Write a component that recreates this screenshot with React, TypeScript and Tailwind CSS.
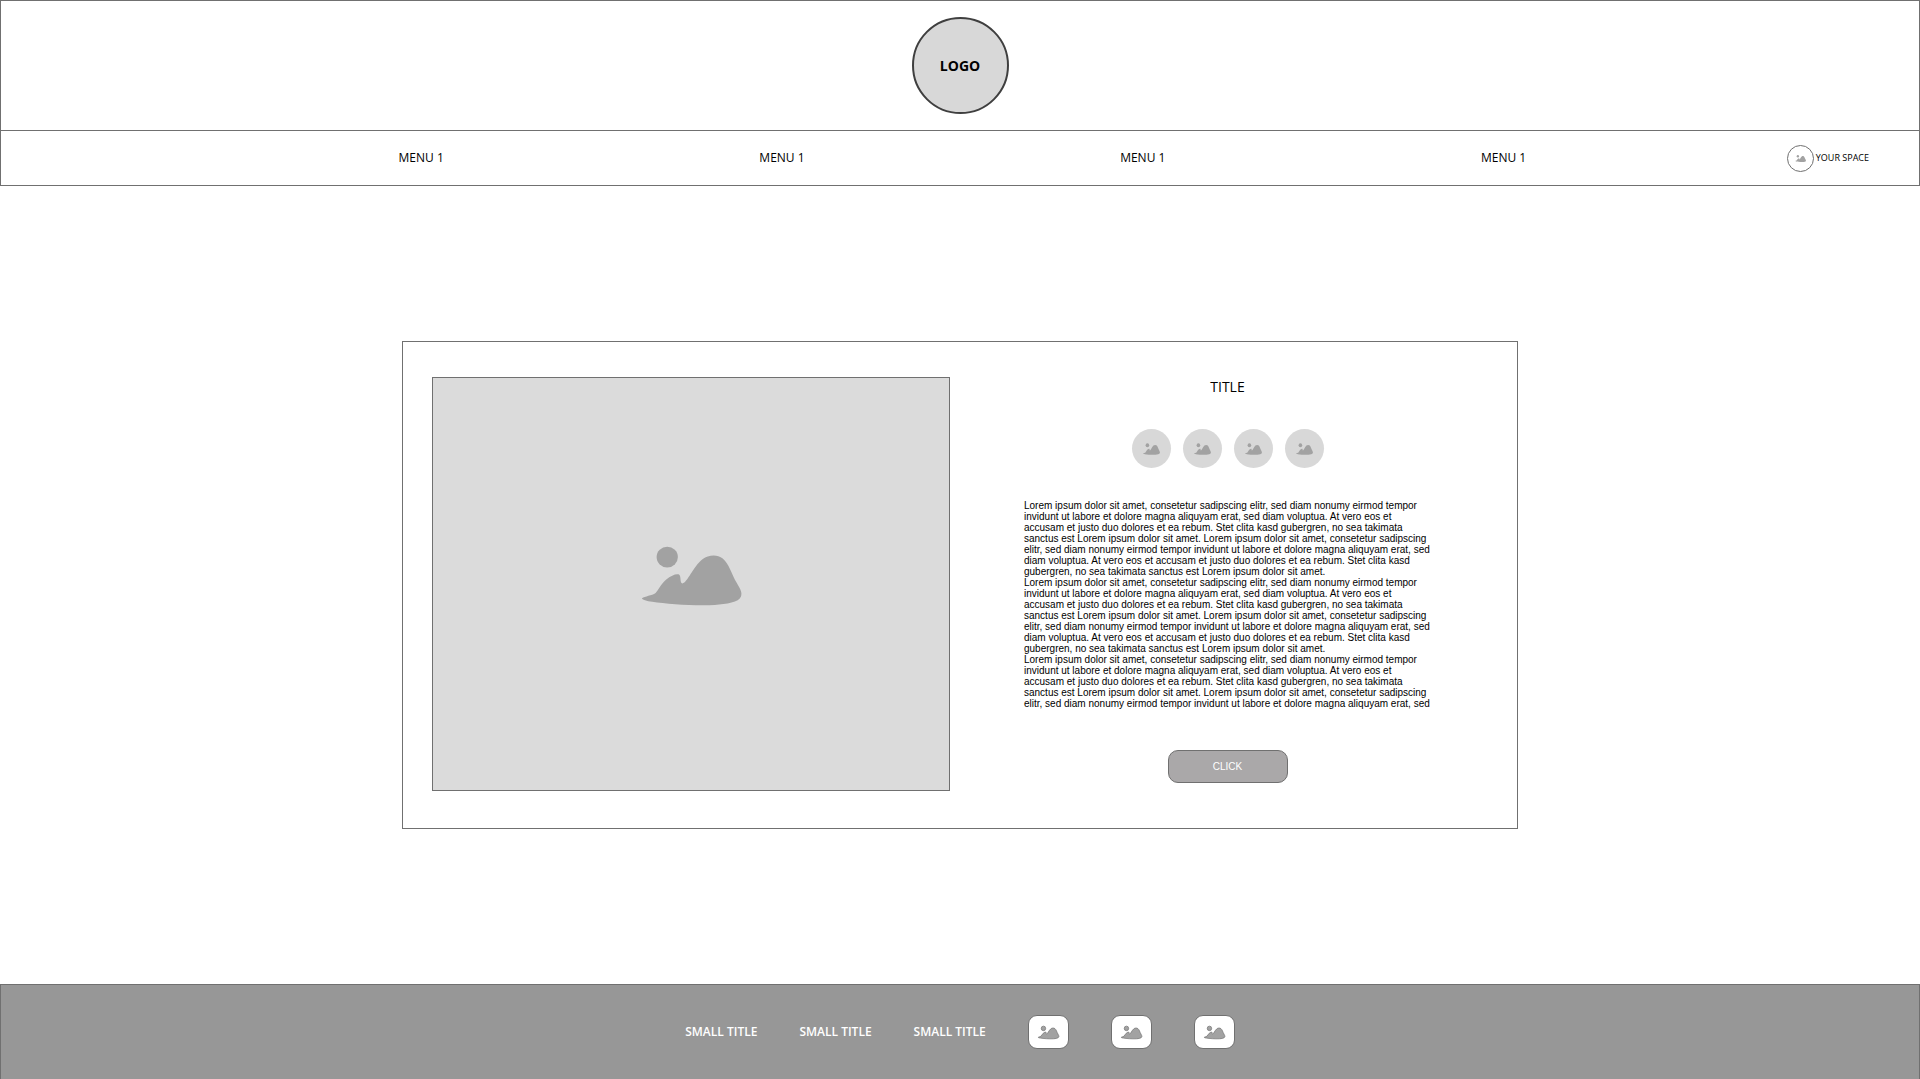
const LOREM =
  "Lorem ipsum dolor sit amet, consetetur sadipscing elitr, sed diam nonumy eirmod tempor invidunt ut labore et dolore magna aliquyam erat, sed diam voluptua. At vero eos et accusam et justo duo dolores et ea rebum. Stet clita kasd gubergren, no sea takimata sanctus est Lorem ipsum dolor sit amet. Lorem ipsum dolor sit amet, consetetur sadipscing elitr, sed diam nonumy eirmod tempor invidunt ut labore et dolore magna aliquyam erat, sed";
const LOREM_END =
  " diam voluptua. At vero eos et accusam et justo duo dolores et ea rebum. Stet clita kasd gubergren, no sea takimata sanctus est Lorem ipsum dolor sit amet.";

function PictureIcon({ className, outline = false }: { className: string; outline?: boolean }) {
  return (
    <svg
      viewBox="0 0 304 184"
      preserveAspectRatio="none"
      className={className}
      fill="#a2a2a2"
      stroke={outline ? "#707070" : "none"}
      strokeWidth={outline ? 10 : 0}
      overflow="visible"
      aria-hidden="true"
    >
      <circle cx="79" cy="34" r="32" />
      <path d="M3 160C12 154 32 152 44 144C54 134 60 116 76 103C90 91 104 85 113 87C123 91 115 114 125 115C140 112 156 64 186 40C202 27 229 24 246 38C265 54 272 84 288 113C300 134 305 143 301 155C295 173 257 178 222 181C160 184 78 178 34 171C18 169 2 164 3 160Z" />
    </svg>
  );
}

export default function App() {
  return (
    <div className="flex min-h-screen flex-col bg-white font-['Open_Sans','Noto_Sans',sans-serif] text-black">
      <header className="border border-[#707070]">
        <div className="flex justify-center border-b border-[#707070] py-4">
          <a
            href="#"
            className="flex size-[97px] items-center justify-center rounded-full border-2 border-[#3f3f3f] bg-[#d8d8d8] text-[14px] font-bold"
          >
            LOGO
          </a>
        </div>
        <nav className="flex h-[54px] items-center pl-[12.5%]">
          {[1, 2, 3, 4].map((n) => (
            <div key={n} className="flex w-[21.5%] justify-center">
              <a href="#" className="text-[12px] leading-4 font-medium">
                MENU 1
              </a>
            </div>
          ))}
          <a href="#" className="flex flex-1 items-center justify-end gap-[2px] pr-[50px] text-[9px] whitespace-nowrap">
            <span className="flex size-[27px] items-center justify-center rounded-full border border-[#707070]">
              <PictureIcon className="h-[7px] w-[11px]" />
            </span>
            YOUR SPACE
          </a>
        </nav>
      </header>

      <main className="flex flex-1 items-center justify-center">
        <section className="flex w-full max-w-[1116px] border border-[#707070] pt-[35px] pb-[37px] pl-[29px]">
          <div className="flex h-[414px] w-[518px] items-center justify-center border border-[#707070] bg-[#dbdbdb] pb-4">
            <PictureIcon className="h-[60px] w-[101px]" />
          </div>
          <div className="flex flex-1 flex-col items-center pr-3">
            <h1 className="text-[14px] leading-5">TITLE</h1>
            <div className="mt-8 flex gap-3">
              {[1, 2, 3, 4].map((n) => (
                <span key={n} className="flex size-[39px] items-center justify-center rounded-full bg-[#d8d8d8]">
                  <PictureIcon className="h-3 w-[17px]" />
                </span>
              ))}
            </div>
            <div className="mt-8 w-[407px] font-['Liberation_Sans',Arial,sans-serif] text-[10px] leading-[11px]">
              <p>{LOREM + LOREM_END}</p>
              <p>{LOREM + LOREM_END}</p>
              <p>{LOREM}</p>
            </div>
            <button
              type="button"
              className="mt-[41px] h-[33px] w-[120px] rounded-[10px] border border-[#707070] bg-[#aaa8a9] font-['Liberation_Sans',Arial,sans-serif] text-[10px] text-white"
            >
              CLICK
            </button>
          </div>
        </section>
      </main>

      <footer className="flex h-[95px] items-center justify-center gap-[42px] border border-b-0 border-[#707070] bg-[#979797]">
        {[1, 2, 3].map((n) => (
          <a key={n} href="#" className="text-[12px] leading-4 font-semibold text-white">
            SMALL TITLE
          </a>
        ))}
        {[1, 2, 3].map((n) => (
          <a
            key={n}
            href="#"
            aria-label="Picture"
            className="flex h-[34px] w-[41px] items-center justify-center rounded-[9px] border border-[#707070] bg-white"
          >
            <PictureIcon outline className="h-[13px] w-[21px]" />
          </a>
        ))}
      </footer>
    </div>
  );
}
